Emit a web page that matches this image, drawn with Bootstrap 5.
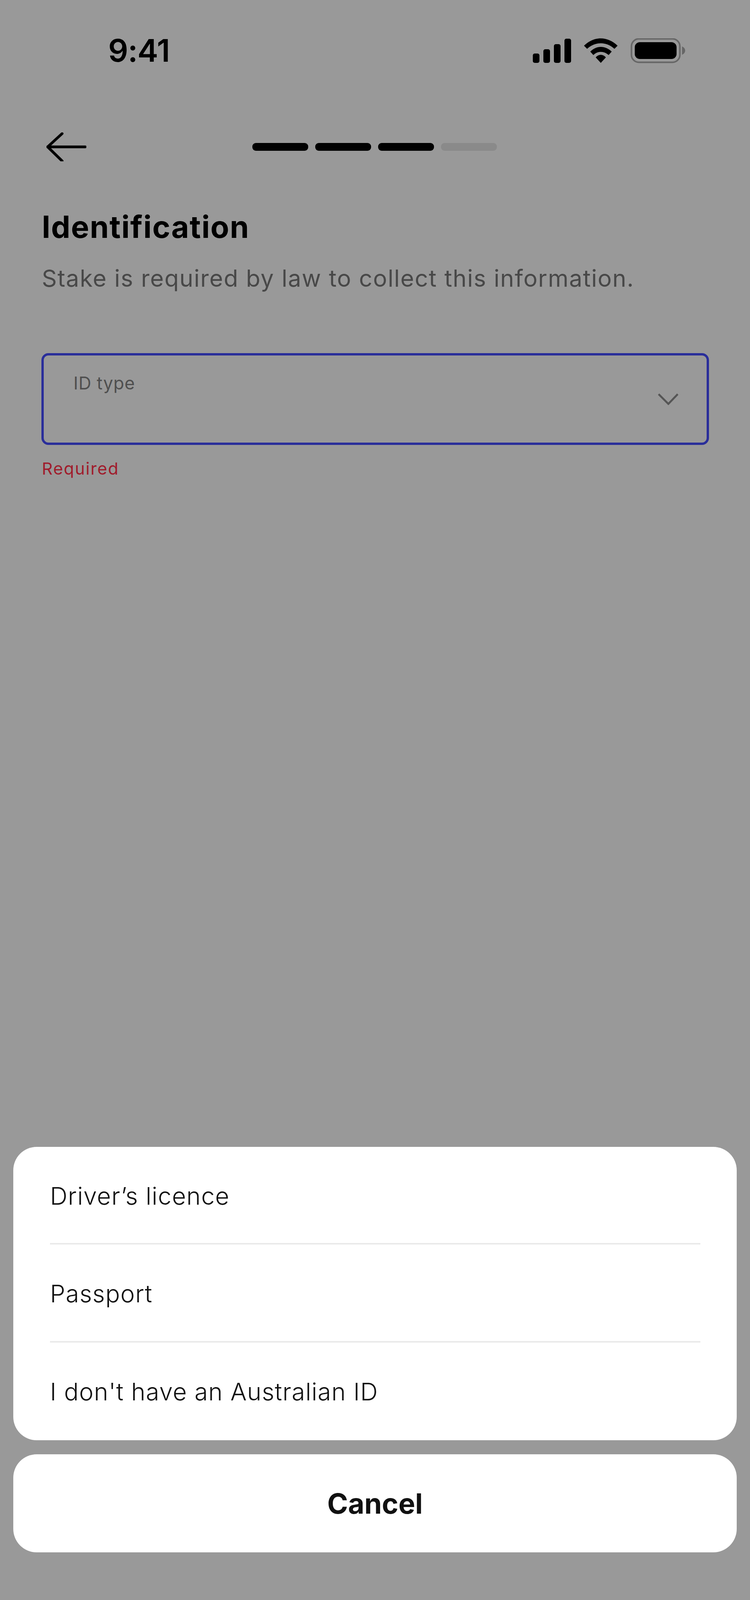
<!DOCTYPE html>
<html lang="en">
<head>
<meta charset="utf-8">
<title>Identification</title>
<link rel="stylesheet" href="https://cdn.jsdelivr.net/npm/bootstrap@5.3.0/dist/css/bootstrap.min.css">
<style>
body{background:#999;font-family:"Inter","Liberation Sans",sans-serif;color:#000}
.screen{height:4171px}
.status-bar{padding:98px 165px 0 277px;height:200px}
.clock{font-size:80px;line-height:62px;font-weight:600;letter-spacing:-1px}
.top-nav{height:80px;margin-top:136px;padding-left:119px}
.back-arrow{width:102px;height:74px;flex:none}
.steps{gap:17.5px;margin-left:424.5px}
.step{width:143.5px;height:20px;border-radius:9px;background:#000}
.step-off{background:#8a8a8a}
.page-title{margin:118px 0 0 107px;font-size:78px;line-height:94px;font-weight:700;letter-spacing:1.8px}
.page-sub{margin:46px 0 0 107px;font-size:60px;line-height:76px;font-weight:400;color:#484848;letter-spacing:1.7px}
.field{margin:154px 105px 0 106px;height:235px;border:6px solid #2a2e9a;border-radius:18px;padding:44px 0 0 76px;position:relative}
.field-label{font-size:45px;line-height:54px;color:#4f4f4f;letter-spacing:.85px}
.chevron{position:absolute;right:72px;top:97px;width:53px;height:30px}
.field-error{margin:33px 0 0 107px;font-size:43px;line-height:54px;color:#a01c2c;letter-spacing:2.1px}
.sheet{margin:auto 34px 0}
.sheet-card{background:#fff;border-radius:60px}
.opt-list{padding:0 93px 0 94px}
.opt{height:250.5px;font-size:62px;line-height:76px;font-weight:300;padding-top:88px;color:#111;border-bottom:4px solid #eaeaea;letter-spacing:1.2px}
.opt:last-child{border-bottom:0}
.cancel-card{margin-top:36px;height:251px;font-size:72px;font-weight:700;color:#111}
.home-wrap{height:197px;padding-top:139px}
.home-bar{width:689px;height:22px;border-radius:11px;background:#111}
</style>
</head>
<body>
<div class="screen d-flex flex-column">
  <div class="status-bar d-flex justify-content-between align-items-start">
    <div class="clock">9:41</div>
    <svg width="391" height="64" viewBox="1364 97 391 64" aria-hidden="true">
      <rect x="1364" y="136" width="17" height="24" rx="5" fill="#000"/>
      <rect x="1391" y="125" width="17" height="35" rx="5" fill="#000"/>
      <rect x="1418" y="112" width="17" height="48" rx="5" fill="#000"/>
      <rect x="1445" y="98" width="17" height="62" rx="5" fill="#000"/>
      <path d="M1495 116C1521 91 1555 91 1581 116L1573 124C1552 105 1524 105 1503 124Z" fill="#000"/>
      <path d="M1511 131C1527 115 1549 115 1566 131L1558 140C1546 129 1530 129 1519 140Z" fill="#000"/>
      <path d="M1525 146C1532 137 1544 137 1551 146L1538 160Z" fill="#000"/>
      <rect x="1616.5" y="98.5" width="124" height="60" rx="19" fill="none" stroke="#666" stroke-width="4"/>
      <rect x="1625" y="107" width="107" height="43" rx="13" fill="#000"/>
      <path d="M1746 118C1751 120 1754 124 1754 128.500C1754 133 1751 137 1746 139Z" fill="#666"/>
    </svg>
  </div>
  <div class="top-nav d-flex align-items-center">
    <svg class="back-arrow" viewBox="119 339 102 74" aria-hidden="true"><path d="M159 342L122 376L159 412M122 376H218" fill="none" stroke="#000" stroke-width="7" stroke-linecap="round" stroke-linejoin="round"/></svg>
    <div class="steps d-flex">
      <div class="step"></div><div class="step"></div><div class="step"></div><div class="step step-off"></div>
    </div>
  </div>
  <h1 class="page-title">Identification</h1>
  <p class="page-sub mb-0">Stake is required by law to collect this information.</p>
  <div class="field">
    <div class="field-label">ID type</div>
    <svg class="chevron" viewBox="0 0 53 30" aria-hidden="true"><path d="M2 2L27 27L51 2" fill="none" stroke="#555" stroke-width="5"/></svg>
  </div>
  <div class="field-error">Required</div>
  <div class="sheet">
    <div class="sheet-card opt-list">
      <div class="opt">Driver’s licence</div>
      <div class="opt">Passport</div>
      <div class="opt">I don't have an Australian ID</div>
    </div>
    <div class="sheet-card cancel-card d-flex align-items-center justify-content-center">Cancel</div>
  </div>
  <div class="home-wrap d-flex justify-content-center"><div class="home-bar"></div></div>
</div>
</body>
</html>
